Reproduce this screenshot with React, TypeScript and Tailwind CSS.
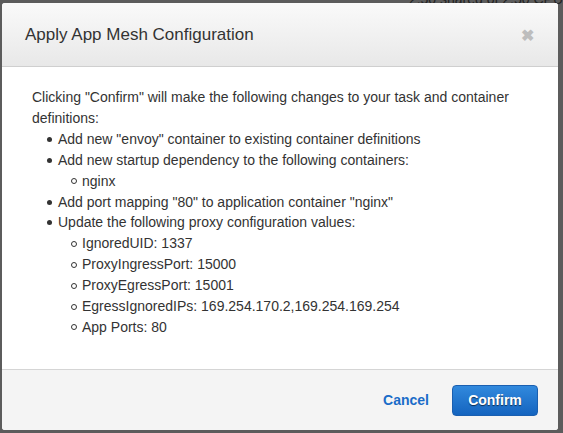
import React from "react";

const subs = [
  "IgnoredUID: 1337",
  "ProxyIngressPort: 15000",
  "ProxyEgressPort: 15001",
  "EgressIgnoredIPs: 169.254.170.2,169.254.169.254",
  "App Ports: 80",
];

function Bullet({ children }: { children: React.ReactNode }) {
  return (
    <div className="flex">
      <span className="w-[26px] shrink-0 flex justify-end pr-[6px] pt-[8px]">
        <span className="block w-[5px] h-[5px] rounded-full bg-[#333]" />
      </span>
      <span>{children}</span>
    </div>
  );
}

function Sub({ children }: { children: React.ReactNode }) {
  return (
    <div className="flex">
      <span className="w-[50px] shrink-0 flex justify-end pr-[5px] pt-[7.5px]">
        <span className="block w-[6px] h-[6px] rounded-full border border-[#333]" />
      </span>
      <span>{children}</span>
    </div>
  );
}

export default function App() {
  return (
    <div
      className="w-[563px] h-[433px] bg-[#5c5c5c] pt-[3px] pl-[2px] relative overflow-hidden"
      style={{ fontFamily: '"Liberation Sans", Arial, sans-serif' }}
    >
      <div className="absolute right-[0px] top-[-11px] text-[14px] text-[#222]">2.50 shared of 2.50 CPU</div>
      <div className="relative w-[556px] h-[427px] bg-white rounded-[3px] flex flex-col overflow-hidden">
        <div className="h-[64px] shrink-0 bg-gradient-to-b from-[#fafafa] to-[#e8e8e8] border-b border-[#cfcfcf] flex items-center justify-between pl-[23px] pr-[22px]">
          <span className="text-[17px] text-[#333] mt-[1px]">Apply App Mesh Configuration</span>
          <span className="text-[#bdbdbd] text-[16px] font-bold leading-none mt-[2px] mr-[2px]">✖</span>
        </div>
        <div className="flex-1 pt-[20px] pl-[30px] pr-[20px] text-[14px] leading-[20.9px] text-[#333]">
          <div>
            Clicking "Confirm" will make the following changes to your task and container definitions:
          </div>
          <Bullet>Add new "envoy" container to existing container definitions</Bullet>
          <Bullet>Add new startup dependency to the following containers:</Bullet>
          <Sub>nginx</Sub>
          <Bullet>Add port mapping "80" to application container "nginx"</Bullet>
          <Bullet>Update the following proxy configuration values:</Bullet>
          {subs.map((s) => (
            <Sub key={s}>{s}</Sub>
          ))}
        </div>
        <div className="h-[61px] shrink-0 bg-[#f4f4f4] border-t border-[#d5d5d5] flex items-center justify-end pr-[20px] gap-[23px]">
          <span className="text-[14px] font-bold text-[#1a6cc8]">Cancel</span>
          <button
            className="w-[86px] h-[31px] rounded-[4px] bg-gradient-to-b from-[#3189dd] to-[#1464bf] border border-[#1a5fb0] text-white font-bold text-[14px]"
            style={{ textShadow: "0 1px 1px rgba(0,0,0,0.6)" }}
          >
            Confirm
          </button>
        </div>
      </div>
    </div>
  );
}
